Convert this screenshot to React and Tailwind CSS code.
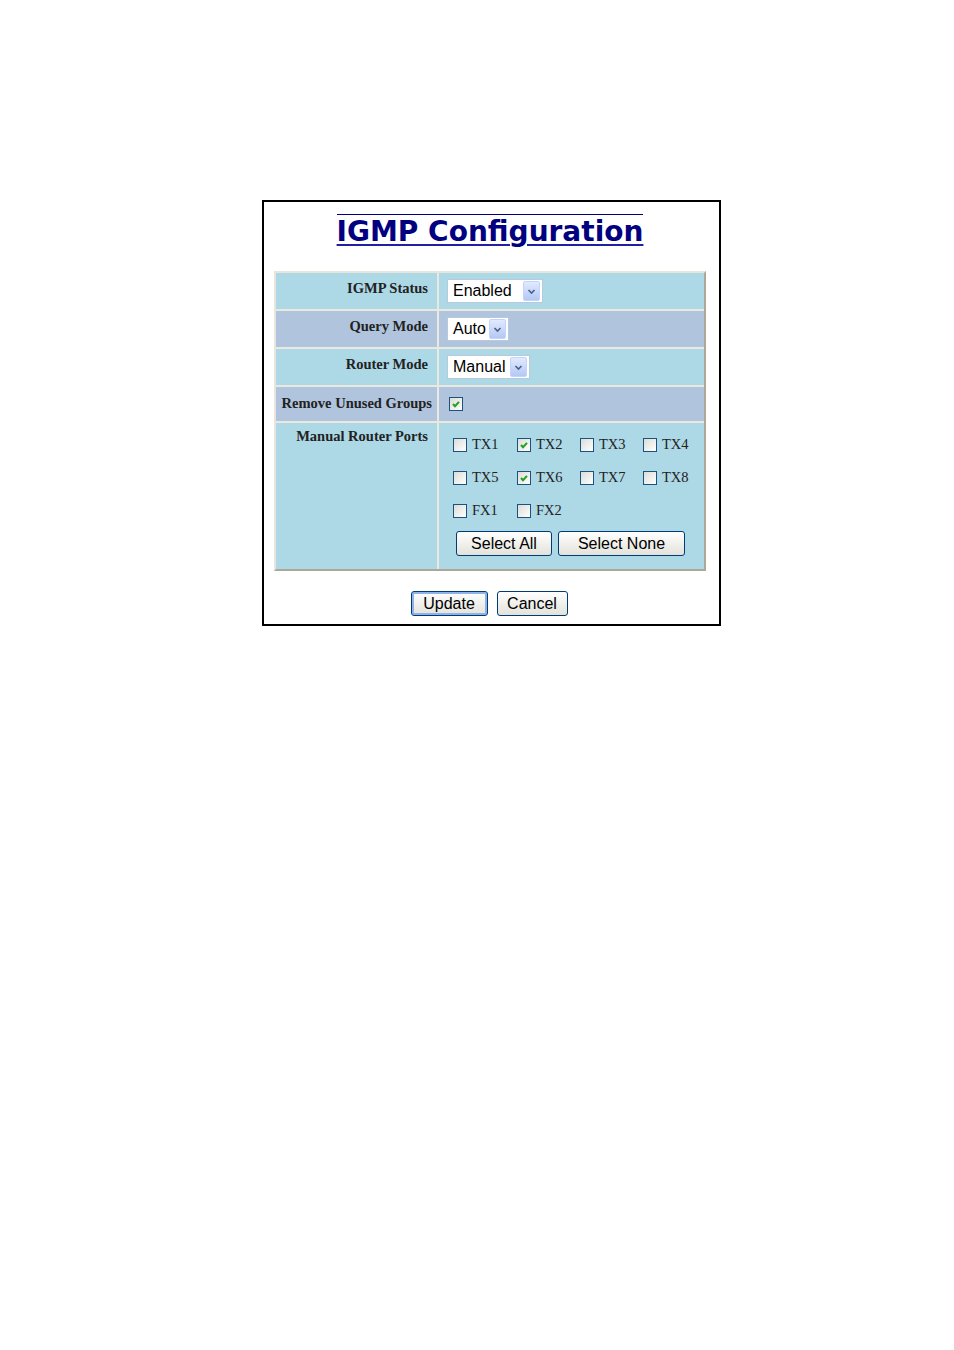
import { useState } from "react"

const rows = [
  { label: "IGMP Status", kind: "select", value: "Enabled", w: "w-[96px]", bg: "bg-[#add8e6]" },
  { label: "Query Mode", kind: "select", value: "Auto", w: "w-[62px]", bg: "bg-[#b0c4de]" },
  { label: "Router Mode", kind: "select", value: "Manual", w: "w-[83px]", bg: "bg-[#add8e6]" },
]

const ports = [
  ["TX1", false], ["TX2", true], ["TX3", false], ["TX4", false],
  ["TX5", false], ["TX6", true], ["TX7", false], ["TX8", false],
  ["FX1", false], ["FX2", false],
]

function Check({ on }) {
  return (
    <span className="inline-flex w-[14px] h-[14px] border border-[#1c5180] bg-gradient-to-br from-[#dcdcd7] to-white items-center justify-center shrink-0">
      {on && (
        <svg width="10" height="10" viewBox="0 0 10 10">
          <path d="M2 5 L4 7.2 L8 2.8" stroke="#21a121" strokeWidth="2" fill="none" />
        </svg>
      )}
    </span>
  )
}

function Select({ value, w }) {
  return (
    <div className={`${w} h-[24px] bg-white border border-[#b7c9dd] flex items-center justify-between pl-[5px] pr-[2px]`}>
      <span className="text-[16px] text-black leading-none" style={{ fontFamily: "'Liberation Sans', Arial, sans-serif" }}>{value}</span>
      <span className="w-[17px] h-[20px] rounded-[2px] bg-gradient-to-b from-[#e1eafe] to-[#b4c8f6] border border-[#c3d3fd] flex items-center justify-center">
        <svg width="9" height="7" viewBox="0 0 9 7">
          <path d="M1.5 2 L4.5 5 L7.5 2" stroke="#4d6185" strokeWidth="1.6" fill="none" />
        </svg>
      </span>
    </div>
  )
}

function XpButton({ children, w, focus }) {
  return (
    <button
      className={`${w} h-[25px] rounded-[3px] border border-[#003c74] bg-gradient-to-b from-white to-[#e3e2da] text-[16px] text-black leading-none ${focus ? "shadow-[inset_0_0_0_2px_#8fb3e8]" : ""}`}
      style={{ fontFamily: "'Liberation Sans', Arial, sans-serif" }}
    >
      {children}
    </button>
  )
}

export default function App() {
  const [checked] = useState(true)

  const serif = { fontFamily: "'Liberation Serif', 'Times New Roman', serif" }

  return (
    <div className="w-[954px] h-[1350px] bg-white pt-[200px] pl-[262px]">
      <div className="w-[459px] h-[426px] border-2 border-black flex flex-col">

        {/* Title */}
        <div className="flex justify-center pt-[12px] pr-[3px]">
          <span
            className="border-t border-[#000080] text-[28px] leading-[31px] pt-[1px] font-bold text-[#000080] underline decoration-[#2020a0] decoration-[2px] underline-offset-[3px]"
            style={{ fontFamily: "'DejaVu Sans', Verdana, sans-serif" }}
          >
            IGMP Configuration
          </span>
        </div>

        {/* Table */}
        <div className="ml-[10px] mt-[24px] w-[432px] border-2 border-t-[#e8e5dc] border-l-[#e8e5dc] border-r-[#aca899] border-b-[#aca899] bg-[#ebe8df] flex flex-col gap-[2px]" style={serif}>
          {rows.map(r => (
            <div key={r.label} className="flex gap-[2px] h-[36px]">
              <div className={`w-[161px] shrink-0 ${r.bg} flex justify-end items-start pt-[5px] pr-[9px] text-[14.5px] font-bold text-[#222]`}>
                {r.label}
              </div>
              <div className={`flex-1 ${r.bg} flex items-center pl-[8px]`}>
                <Select value={r.value} w={r.w} />
              </div>
            </div>
          ))}

          <div className="flex gap-[2px] h-[34px]">
            <div className="w-[161px] shrink-0 bg-[#b0c4de] flex justify-end items-center pr-[5px] text-[14.5px] font-bold text-[#222] whitespace-nowrap">
              Remove Unused Groups
            </div>
            <div className="flex-1 bg-[#b0c4de] flex items-center pl-[10px]">
              <Check on={checked} />
            </div>
          </div>

          <div className="flex gap-[2px] h-[146px]">
            <div className="w-[161px] shrink-0 bg-[#add8e6] flex justify-end items-start pt-[3px] pr-[9px] text-[14.5px] font-bold text-[#222]">
              Manual Router Ports
            </div>
            <div className="flex-1 min-w-0 bg-[#add8e6] flex flex-col pl-[14px] pt-[15px]">
              <div className="grid grid-cols-[64px_63px_63px_60px] gap-y-[19px]">
                {ports.map(([name, on]) => (
                  <div key={name} className="flex items-center gap-[5px] h-[14px] text-[14.5px] text-[#222]">
                    <Check on={on} />
                    <span>{name}</span>
                  </div>
                ))}
              </div>
              <div className="flex gap-[6px] mt-[13px] pl-[3px]">
                <XpButton w="w-[96px]">Select All</XpButton>
                <XpButton w="w-[127px]">Select None</XpButton>
              </div>
            </div>
          </div>
        </div>

        {/* Bottom buttons */}
        <div className="flex justify-center gap-[9px] mt-[20px] pr-[5px]">
          <XpButton w="w-[77px]" focus>Update</XpButton>
          <XpButton w="w-[71px]">Cancel</XpButton>
        </div>

      </div>
    </div>
  )
}
